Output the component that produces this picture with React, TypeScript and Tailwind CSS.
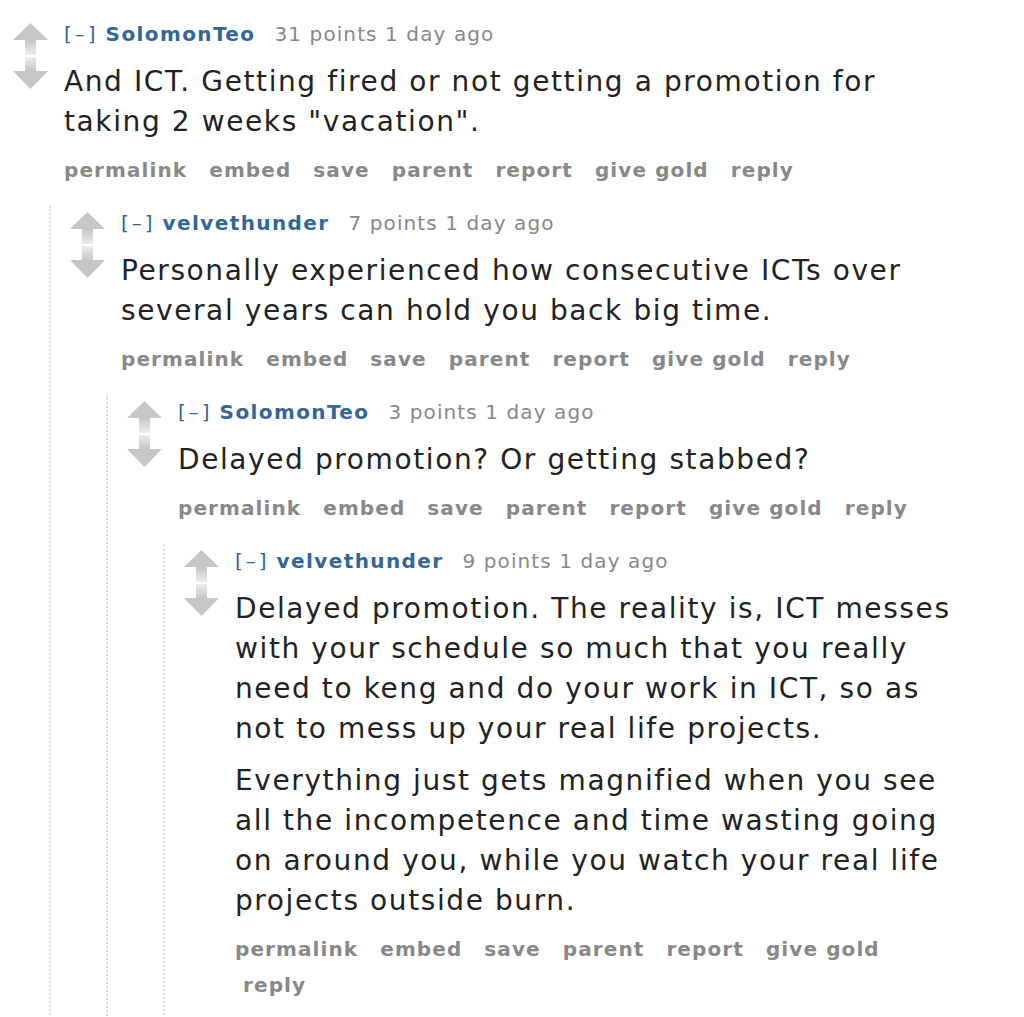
import type { ReactNode } from 'react'

type CommentData = {
  author: string
  points: string
  paras: string[]
}

const BUTTONS = ['permalink', 'embed', 'save', 'parent', 'report', 'give gold', 'reply']

function UpArrow() {
  return (
    <svg width="35" height="32" viewBox="0 0 35 32">
      <defs>
        <linearGradient id="upStem" x1="0" y1="0" x2="0" y2="1">
          <stop offset="0" stopColor="#c6c6c6" />
          <stop offset="1" stopColor="#ededed" />
        </linearGradient>
      </defs>
      <polygon points="17.5,0 35,17 0,17" fill="#c6c6c6" />
      <rect x="12" y="17" width="11" height="15" fill="url(#upStem)" />
    </svg>
  )
}

function DownArrow() {
  return (
    <svg width="35" height="32" viewBox="0 0 35 32">
      <defs>
        <linearGradient id="downStem" x1="0" y1="1" x2="0" y2="0">
          <stop offset="0" stopColor="#c6c6c6" />
          <stop offset="1" stopColor="#ededed" />
        </linearGradient>
      </defs>
      <rect x="12" y="0" width="11" height="14" fill="url(#downStem)" />
      <polygon points="0,14 35,14 17.5,32" fill="#c6c6c6" />
    </svg>
  )
}

function Comment({ c, children }: { c: CommentData; children?: ReactNode }) {
  return (
    <div className="pt-[5px]">
      <div className="flex">
        <div className="ml-[13px] w-[35px] shrink-0 pt-[1px] flex flex-col gap-[2px]">
          <UpArrow />
          <DownArrow />
        </div>
        <div className="ml-[16px] flex-1 min-w-0">
          <p className="text-[20px] leading-[24px] text-[#888] tracking-[1.1px]">
            <span className="text-[#369] tracking-[3px]">[–]</span>
            <span className="ml-[7px] font-bold text-[#369] tracking-[1.4px]">{c.author}</span>
            <span className="ml-[19px]">{c.points} points 1 day ago</span>
          </p>
          <div className="mt-[16px] flex flex-col gap-[12px] text-[28px] leading-[40px] text-[#222] tracking-[1.6px]">
            {c.paras.map((p, i) => (
              <p key={i}>{p}</p>
            ))}
          </div>
          <div className="mt-[10px] flex flex-wrap text-[20px] leading-[36px] font-bold text-[#888] tracking-[1.1px]">
            {BUTTONS.map((b, i) => (
              <span key={b} className={i === 0 ? 'pr-[14px] whitespace-nowrap' : 'pl-2 pr-[14px] whitespace-nowrap'}>
                {b}
              </span>
            ))}
          </div>
        </div>
      </div>
      {children && (
        <div className="ml-[49px] mt-[18px] border-l-2 border-dotted border-[#d8d8fa] pl-[6px] pb-[60px]">
          {children}
        </div>
      )}
    </div>
  )
}

export default function App() {
  return (
    <div className="h-[1017px] overflow-hidden bg-white" style={{ fontFamily: '"DejaVu Sans", Verdana, sans-serif' }}>
      <div className="w-[958px] pt-[17px]">
        <Comment c={{ author: 'SolomonTeo', points: '31', paras: ['And ICT. Getting fired or not getting a promotion for taking 2 weeks "vacation".'] }}>
          <Comment c={{ author: 'velvethunder', points: '7', paras: ['Personally experienced how consecutive ICTs over several years can hold you back big time.'] }}>
            <Comment c={{ author: 'SolomonTeo', points: '3', paras: ['Delayed promotion? Or getting stabbed?'] }}>
              <Comment
                c={{
                  author: 'velvethunder',
                  points: '9',
                  paras: [
                    'Delayed promotion. The reality is, ICT messes with your schedule so much that you really need to keng and do your work in ICT, so as not to mess up your real life projects.',
                    'Everything just gets magnified when you see all the incompetence and time wasting going on around you, while you watch your real life projects outside burn.',
                  ],
                }}
              />
            </Comment>
          </Comment>
        </Comment>
      </div>
    </div>
  )
}
